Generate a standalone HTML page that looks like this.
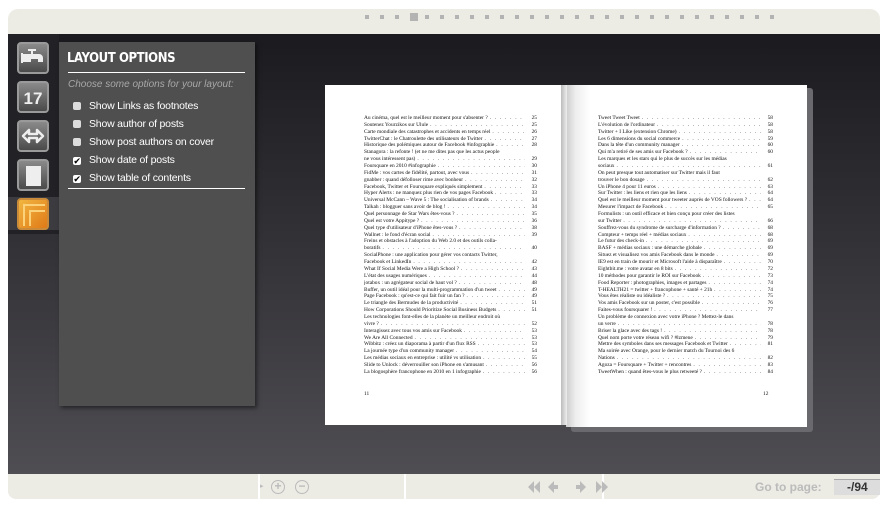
<!DOCTYPE html>
<html><head><meta charset="utf-8"><style>
*{margin:0;padding:0;box-sizing:border-box}
body{width:889px;height:505px;background:#fff;position:relative;overflow:hidden;font-family:"Liberation Sans","DejaVu Sans",sans-serif}
#top{position:absolute;left:8px;top:9px;width:872px;height:27px;background:#ecebe4;border-radius:10px 10px 0 0}
.dot{position:absolute;top:15px;width:4px;height:4px;background:#b3b3b3}
#main{position:absolute;left:8px;top:34px;width:872px;height:440px;background:linear-gradient(#1b1b1f,#2a2a2e 30%,#3e3d42 70%,#4f4e53)}
#bot{position:absolute;left:8px;top:474px;width:872px;height:25px;background:#ecebe4;border-radius:0 0 8px 8px}
#tabs{position:absolute;left:8px;top:34px;width:51px;height:200px;background:#222226}
.ic{position:absolute;left:17px;width:32px;height:32px;border-radius:4px;background:linear-gradient(#8a8a8a,#4a4a4a);border:2px solid #9a9a9a;color:#eee}
#panel{position:absolute;left:59px;top:42px;width:196px;height:364px;background:#4f4f4f;box-shadow:2px 2px 4px rgba(0,0,0,.5)}
#panel h1{position:absolute;left:8px;top:9px;font-size:13px;color:#fff;font-weight:bold;letter-spacing:-.4px;font-family:"DejaVu Sans Condensed","DejaVu Sans",sans-serif}
.hr{position:absolute;left:9px;width:177px;height:1px;background:#fff}
#panel .sub{position:absolute;left:9px;top:37px;font-size:10px;font-style:italic;color:#a8a8a8}
.opt{position:absolute;left:14px;font-size:10.5px;color:#fff;letter-spacing:-.2px}
.cb{display:inline-block;width:8px;height:8px;background:#ddd;border-radius:2px;margin-right:8px;vertical-align:-1px;position:relative}
.pg{position:absolute;background:#fff;font-family:"Liberation Serif",serif;font-size:5.4px;color:#111}
.ln{position:absolute;height:7px;display:flex;white-space:nowrap;overflow:hidden}
.ln .t{flex:none}.ln .d{flex:1;overflow:hidden;letter-spacing:1.2px;padding:0 2px}.ln .n{flex:none;width:12px;text-align:right}
</style></head><body>
<div id="top"></div>
<div id="main"></div>
<div id="tabs"></div>
<div style="position:absolute;left:8px;top:197px;width:51px;height:33px;background:#3c3c40"></div>
<div class="ic" style="top:42px"><svg width="28" height="28" viewBox="0 0 28 28"><path d="M4 10h8V7h-3V5h8v2h-3v3h6a4 4 0 0 1 4 4v4h-5v-3h-7v3H4z" fill="#eee"/><rect x="2" y="9" width="2" height="10" fill="#eee"/></svg></div>
<div class="ic" style="top:81px;font-size:17px;font-weight:bold;text-align:center;line-height:32px">17</div>
<div class="ic" style="top:120px"><svg width="28" height="28" viewBox="0 0 28 28"><path d="M4 14l6-6v4h8V8l6 6-6 6v-4h-8v4z" fill="none" stroke="#eee" stroke-width="2.5" stroke-linejoin="round"/></svg></div>
<div class="ic" style="top:159px"><div style="position:absolute;left:7px;top:5px;width:15px;height:20px;background:#eee"></div></div>
<div class="ic" style="top:198px;background:linear-gradient(135deg,#f2b640,#e07a18);border-color:#c98a3a"><div style="position:absolute;left:4px;top:4px;width:22px;height:22px;border-top:2px solid #fbd27a;border-left:2px solid #fbd27a"></div><div style="position:absolute;left:10px;top:10px;width:16px;height:16px;border-top:2px solid #fbd27a;border-left:2px solid #fbd27a"></div></div>
<div id="panel">
<h1>LAYOUT OPTIONS</h1>
<div class="hr" style="top:30px"></div>
<div class="sub">Choose some options for your layout:</div>
<div class="opt" style="top:58px"><span class="cb"></span>Show Links as footnotes</div>
<div class="opt" style="top:76px"><span class="cb"></span>Show author of posts</div>
<div class="opt" style="top:94px"><span class="cb"></span>Show post authors on cover</div>
<div class="opt" style="top:112px"><span class="cb" style="background:#fff;color:#000;font-size:9px;line-height:8px;text-align:center">✔</span>Show date of posts</div>
<div class="opt" style="top:130px"><span class="cb" style="background:#fff;color:#000;font-size:9px;line-height:8px;text-align:center">✔</span>Show table of contents</div>
<div class="hr" style="top:146px"></div>
</div>
<div style="position:absolute;left:571px;top:88px;width:242px;height:344px;background:#6a6a6e;border-radius:3px"></div>
<div class="pg" style="left:325px;top:85px;width:237px;height:340px" id="L"></div>
<div class="pg" style="left:566px;top:85px;width:241px;height:342px;background:linear-gradient(90deg,#ccc,#eee 4%,#fff 10%)" id="R"></div>
<div style="position:absolute;left:561px;top:85px;width:6px;height:340px;background:linear-gradient(90deg,#bbb,#eee)"></div>
<div id="bot"></div>
<div style="position:absolute;left:258px;top:474px;width:2px;height:25px;background:#fff"></div>
<div style="position:absolute;left:404px;top:474px;width:2px;height:25px;background:#fff"></div>
<div style="position:absolute;left:602px;top:474px;width:2px;height:25px;background:#fff"></div>
<div style="position:absolute;left:260px;top:482px;font-size:7px;color:#bbb">▸</div>
<div style="position:absolute;left:271px;top:480px;width:14px;height:14px;border:1.5px solid #bbb;border-radius:50%;color:#bbb;font-size:12px;line-height:11px;text-align:center;font-weight:bold">+</div>
<div style="position:absolute;left:295px;top:480px;width:14px;height:14px;border:1.5px solid #bbb;border-radius:50%;color:#bbb;font-size:12px;line-height:10px;text-align:center;font-weight:bold">−</div>
<svg style="position:absolute;left:528px;top:479px" width="82" height="16" viewBox="0 0 82 16"><g fill="#bbb"><path d="M6 2l-6 6 6 6zM12 2l-6 6 6 6z"/><path d="M26 2l-6 6 6 6zM26 6h4v4h-4z"/><path d="M52 2l6 6-6 6zM48 6h4v4h-4z"/><path d="M68 2l6 6-6 6zM74 2l6 6-6 6z"/></g></svg>
<div style="position:absolute;left:755px;top:480px;font-size:12px;font-weight:bold;color:#bbb">Go to page:</div>
<div style="position:absolute;left:834px;top:479px;width:46px;height:16px;background:#ddd;border-top:1px solid #aaa;font-size:12px;font-weight:bold;color:#333;padding-left:13px;line-height:15px;overflow:hidden;white-space:nowrap">-/94</div>
<div style="position:absolute;left:880px;top:0;width:9px;height:505px;background:#fff"></div>
<script>
var dx=[365,380,395,413,425,440,455,470,485,500,515,530,545,560,575,590,605,620,635,650,665,680,695,710,725,740,755,770];
dx.forEach(function(x,i){var d=document.createElement('div');d.className='dot';if(i==3){d.style.width='8px';d.style.height='8px';d.style.top='13px';x=410}d.style.left=x+'px';document.body.appendChild(d)});
var L=[["Au cinéma, quel est le meilleur moment pour s'absenter ?","25"],["Soutenez Yourzikos sur Ulule","25"],["Carte mondiale des catastrophes et accidents en temps réel","26"],["TwitterChat : le Chatroulette des utilisateurs de Twitter","27"],["Historique des polémiques autour de Facebook #infographie","28"],["Stanagora : la refonte ! (et ne me dites pas que les actus people",""],["ne vous intéressent pas)","29"],["Foursquare en 2010 #infographie","30"],["FidMe : vos cartes de fidélité, partout, avec vous","31"],["gnabber : quand défolloser rime avec bonheur","32"],["Facebook, Twitter et Foursquare expliqués simplement","33"],["Hyper Alerts : ne manquez plus rien de vos pages Facebook","33"],["Universal McCann – Wave 5 : The socialisation of brands","34"],["Talkah : blogguer sans avoir de blog !","34"],["Quel personnage de Star Wars êtes-vous ?","35"],["Quel est votre Appitype ?","36"],["Quel type d'utilisateur d'iPhone êtes-vous ?","38"],["Wallnet : le fond d'écran social","39"],["Freins et obstacles à l'adoption du Web 2.0 et des outils colla-",""],["boratifs","40"],["SocialPhone : une application pour gérer vos contacts Twitter,",""],["Facebook et LinkedIn","42"],["What If Social Media Were a High School ?","43"],["L'état des usages numériques","44"],["jotabox : un agrégateur social de haut vol ?","48"],["Buffer, un outil idéal pour la multi-programmation d'un tweet","49"],["Page Facebook : qu'est-ce qui fait fuir un fan ?","49"],["Le triangle des Bermudes de la productivité","51"],["How Corporations Should Prioritize Social Business Budgets","51"],["Les technologies font-elles de la planète un meilleur endroit où",""],["vivre ?","52"],["Interagissez avec tous vos amis sur Facebook","53"],["We Are All Connected","53"],["Wibbitz : créez un diaporama à partir d'un flux RSS","53"],["La journée type d'un community manager","54"],["Les médias sociaux en entreprise : utilité vs utilisation","55"],["Slide to Unlock : déverrouiller son iPhone en s'amusant","56"],["La blogosphère francophone en 2010 en 1 infographie","56"]];
var R=[["Tweet Tweet Tweet","58"],["L'évolution de l'ordinateur","58"],["Twitter + I Like (extension Chrome)","58"],["Les 6 dimensions du social commerce","59"],["Dans la tête d'un community manager","60"],["Qui m'a retiré de ses amis sur Facebook ?","60"],["Les marques et les stars qui le plus de succès sur les médias",""],["sociaux","61"],["On peut presque tout automatiser sur Twitter mais il faut",""],["trouver le bon dosage","62"],["Un iPhone 4 pour 11 euros","63"],["Sur Twitter : les liens et rien que les liens","64"],["Quel est le meilleur moment pour tweeter auprès de VOS followers ?","64"],["Mesurer l'impact de Facebook","65"],["Formulists : un outil efficace et bien conçu pour créer des listes",""],["sur Twitter","66"],["Souffrez-vous du syndrome de surcharge d'information ?","68"],["Compteur + temps réel + médias sociaux","68"],["Le futur des check-in","69"],["BASF + médias sociaux : une démarche globale","69"],["Situez et visualisez vos amis Facebook dans le monde","69"],["IE9 est en train de mourir et Microsoft l'aide à disparaître","70"],["Eightbit.me : votre avatar en 8 bits","72"],["10 méthodes pour garantir le ROI sur Facebook","73"],["Food Reporter : photographies, images et partages","74"],["T-HEALTH21 = twitter + francophone + santé + 21h","74"],["Vous êtes réaliste ou idéaliste ?","75"],["Vos amis Facebook sur un poster, c'est possible","76"],["Faites-vous foursquarer !","77"],["Un problème de connexion avec votre iPhone ? Mettez-le dans",""],["un verre","78"],["Briser la glace avec des tags !","78"],["Quel nom porte votre réseau wifi ? #lzmene","79"],["Mettre des symboles dans ses messages Facebook et Twitter","81"],["Ma soirée avec Orange, pour le dernier match du Tournoi des 6",""],["Nations","82"],["Agoza = Foursquare + Twitter + rencontres","83"],["TweetWhen : quand êtes-vous le plus retweeté ?","84"]];
function fill(id,arr,x0,w,pn){var p=document.getElementById(id);arr.forEach(function(a,i){var d=document.createElement('div');d.className='ln';d.style.left=x0+'px';d.style.width=w+'px';d.style.top=(30+i*6.86)+'px';d.innerHTML='<span class="t">'+a[0]+'</span><span class="d">'+(a[1]?'. . . . . . . . . . . . . . . . . . . . . . . . . . . . . . . . . . . . . . . .':'')+'</span><span class="n">'+a[1]+'</span>';p.appendChild(d)});var n=document.createElement('div');n.style.cssText='position:absolute;top:306px;'+pn;n.textContent=id=='L'?'11':'12';p.appendChild(n)}
fill('L',L,39,173,'left:39px');fill('R',R,32,175,'left:197px');
</script>
</body></html>
